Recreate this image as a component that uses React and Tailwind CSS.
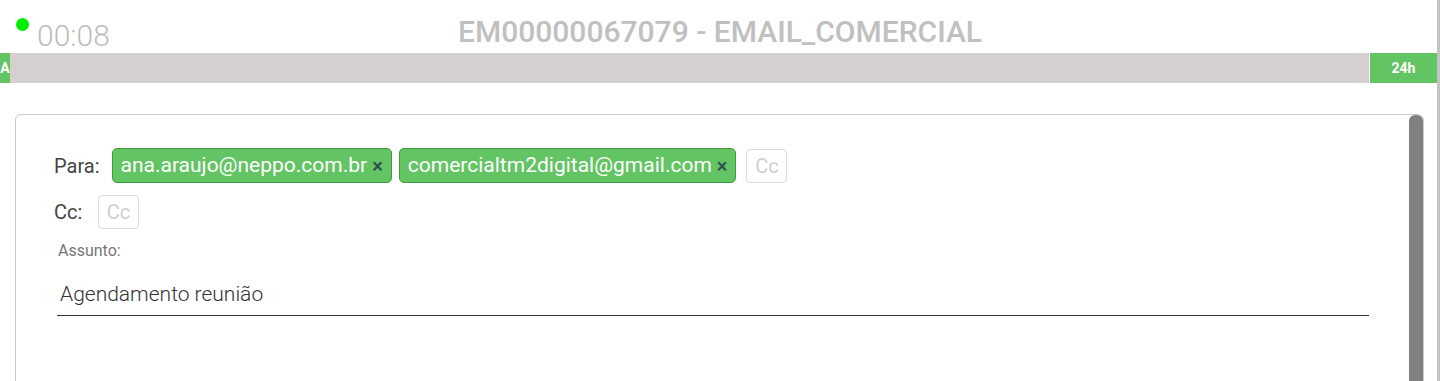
import React from 'react'

const chips = ["ana.araujo@neppo.com.br", "comercialtm2digital@gmail.com"]

function Chip({ label }) {
    return (
        <div className="flex items-center h-[35px] pl-[8px] pr-[8px] bg-[#62c462] border border-[#3d9a3d] rounded-[5px] text-white text-[21px] leading-none">
            <span>{label}</span>
            <span className="ml-[5px] text-[#2f4f4f] text-[20px] font-medium">×</span>
        </div>
    )
}

function CcBox() {
    return (
        <div className="flex items-center justify-center w-[41px] h-[34px] border border-[#dcdcdc] rounded-[4px] text-[#cfcfcf] text-[20px]">
            Cc
        </div>
    )
}

export default function App() {
    return (
        <div className="w-[1440px] h-[381px] overflow-hidden bg-white font-['Roboto',sans-serif] flex">
            <div className="w-[1437px] flex flex-col">
                {/* header */}
                <div className="relative h-[53px] shrink-0 flex items-end">
                    <span className="absolute left-[16px] top-[18px] w-[13px] h-[13px] rounded-full bg-[#00ee00]" />
                    <span className="ml-[37px] mb-[2px] text-[30px] font-light text-[#bdbdbd] leading-none">00:08</span>
                    <div className="absolute inset-x-0 top-[17px] pl-[3px] text-center text-[30px] font-medium text-[#c0c0c0] leading-none">
                        EM00000067079 - EMAIL_COMERCIAL
                    </div>
                </div>

                {/* sla bar */}
                <div className="flex h-[30px] shrink-0 bg-[#d3d0cf] text-white text-[14px] font-bold">
                    <div className="w-[10px] bg-[#62c462] flex items-center justify-center">A</div>
                    <div className="flex-1" />
                    <div className="w-[68px] bg-[#62c462] border-l border-white flex items-center justify-center">24h</div>
                </div>

                {/* card */}
                <div className="ml-[15px] mr-[13px] mt-[31px] h-[320px] shrink-0 border border-[#cccccc] rounded-[6px] flex">
                    <div className="flex-1 pl-[38px] pt-[33px] pr-[40px]">
                        <div className="flex items-center gap-[7px]">
                            <span className="text-[20px] text-[#444] mr-[5px]">Para:</span>
                            {chips.map((c) => <Chip key={c} label={c} />)}
                            <div className="ml-[3px]"><CcBox /></div>
                        </div>
                        <div className="flex items-center mt-[12px]">
                            <span className="text-[20px] text-[#444] w-[44px]">Cc:</span>
                            <CcBox />
                        </div>
                        <div className="mt-[10px] ml-[4px] text-[16px] text-[#777]">Assunto:</div>
                        <div className="mt-[16px] ml-[3px] border-b border-[#333] pb-[4px] pl-[3px] text-[21px] font-light text-[#333]">
                            Agendamento reunião
                        </div>
                    </div>
                    <div className="w-[14px] bg-[#808080] rounded-t-[6px]" />
                </div>
            </div>
            <div className="w-[3px] bg-[#c4c4c4]" />
        </div>
    )
}
